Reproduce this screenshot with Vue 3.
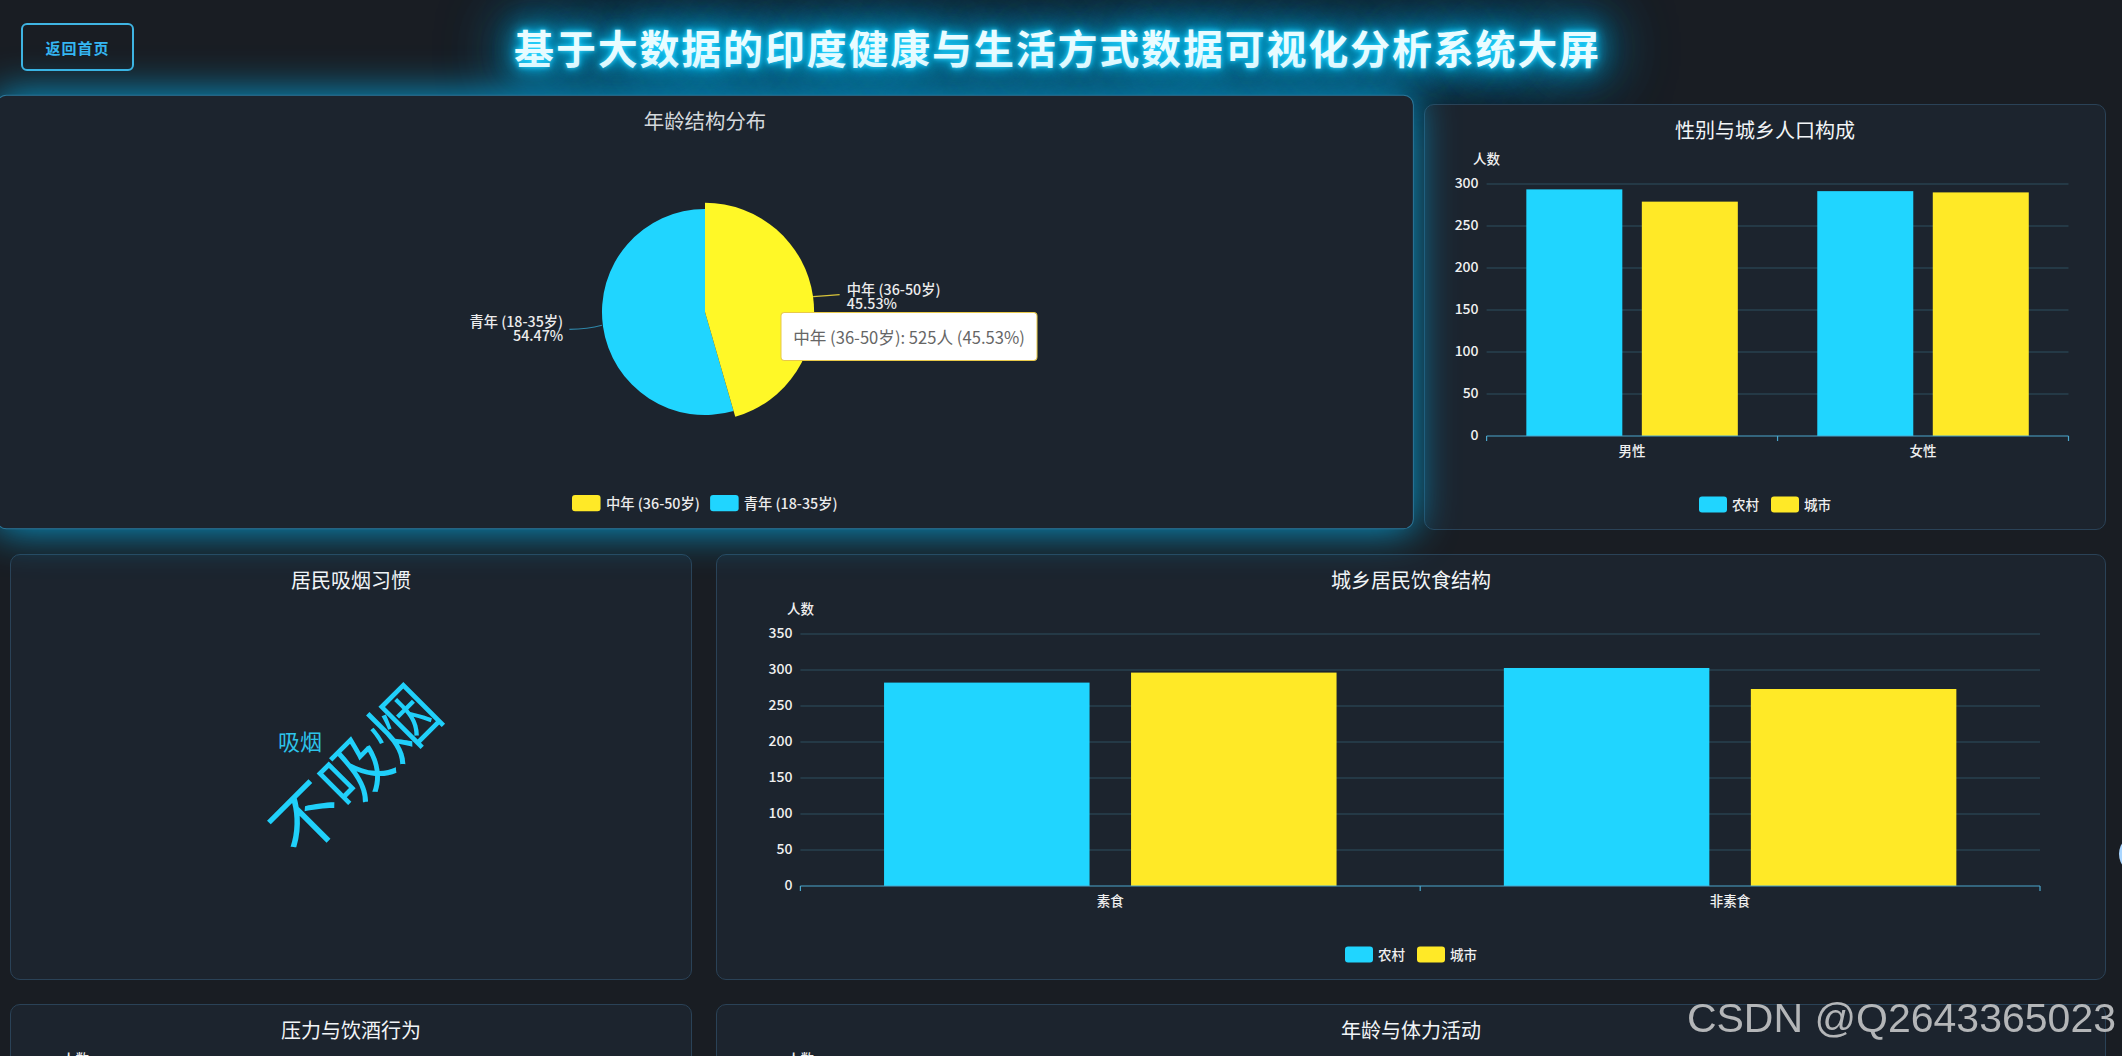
<script setup>
// 图表颜色
const RURAL = '#20d5ff';
const URBAN = '#ffe927';

const makeBar = (opt) => {
  const { left, right, top, bottom, max, step, cats, series, cardW } = opt;
  const cw = cats.length ? (right - left) / cats.length : 0;
  const barW = opt.barW;
  const gap = opt.gap;
  const sy = (v) => bottom - (v / max) * (bottom - top);
  const ticks = [];
  if (cats.length) {
    for (let v = 0; v <= max; v += step) ticks.push({ v, y: sy(v) });
  }
  const bars = [];
  cats.forEach((c, i) => {
    const start = left + i * cw + (cw - barW * 2 - gap) / 2;
    bars.push({ id: c + 'r', x: start, y: sy(series[0][i]), h: bottom - sy(series[0][i]), fill: RURAL });
    bars.push({ id: c + 'u', x: start + barW + gap, y: sy(series[1][i]), h: bottom - sy(series[1][i]), fill: URBAN });
  });
  const labels = cats.map((c, i) => ({ text: c, x: left + (i + 0.5) * cw }));
  const axisTicks = cats.length ? cats.map((c, i) => left + i * cw).concat(right) : [];
  const lx = cardW / 2 - 66;
  return { left, right, bottom, barW, ticks, bars, labels, axisTicks, lx, hasAxis: cats.length > 0 };
};

const rows = [
  {
    cls: 'row-wide-first',
    cards: [
      { id: 'age', title: '年龄结构分布', kind: 'pie', active: true, w: 1390 },
      {
        id: 'gender', title: '性别与城乡人口构成', kind: 'bar', w: 682,
        chart: makeBar({
          left: 62.6, right: 644.5, top: 80, bottom: 332, max: 300, step: 50, barW: 96, gap: 19.5, cardW: 682,
          cats: ['男性', '女性'], series: [[293.6, 291.5], [279, 290]]
        })
      }
    ]
  },
  {
    cls: 'row-narrow-first',
    cards: [
      { id: 'smoke', title: '居民吸烟习惯', kind: 'cloud', w: 682 },
      {
        id: 'diet', title: '城乡居民饮食结构', kind: 'bar', w: 1390,
        chart: makeBar({
          left: 84.4, right: 1324, top: 80, bottom: 332, max: 350, step: 50, barW: 205.5, gap: 41.5, cardW: 1390,
          cats: ['素食', '非素食'], series: [[282.5, 302.8], [296.4, 273.6]]
        })
      }
    ]
  },
  {
    // 第三行只露出标题和坐标轴名称
    cls: 'row-narrow-first',
    cards: [
      {
        id: 'stress', title: '压力与饮酒行为', kind: 'bar', w: 682,
        chart: makeBar({ left: 65.5, right: 644, top: 80, bottom: 332, max: 300, step: 50, barW: 96, gap: 19, cardW: 682, cats: [], series: [[], []] })
      },
      {
        id: 'activity', title: '年龄与体力活动', kind: 'bar', w: 1390,
        chart: makeBar({ left: 84.4, right: 1324, top: 80, bottom: 332, max: 300, step: 50, barW: 205, gap: 41, cardW: 1390, cats: [], series: [[], []] })
      }
    ]
  }
];

// 饼图：中年 45.53%，高亮时半径放大
const cx = 695;
const cy = 213;
const endAngle = (0.4553 * 360 * Math.PI) / 180;
const point = (r, a) => `${cx + r * Math.sin(a)} ${cy - r * Math.cos(a)}`;
const midPath = `M${cx} ${cy}L${point(107, 0)}A107 107 0 0 1 ${point(107, endAngle)}Z`;
const youngPath = `M${cx} ${cy}L${point(101, endAngle)}A101 101 0 1 1 ${point(101, Math.PI * 2)}Z`;
</script>

<template>
  <div class="screen">
    <header class="top">
      <button class="back">返回首页</button>
      <h1 class="big-title">基于大数据的印度健康与生活方式数据可视化分析系统大屏</h1>
    </header>

    <section v-for="(row, ri) in rows" :key="ri" class="row" :class="row.cls">
      <div v-for="card in row.cards" :key="card.id" class="card" :class="{ active: card.active }">
        <h3 class="card-title">{{ card.title }}</h3>

        <svg class="chart" :viewBox="`1 47 ${card.w - 2} 378`" preserveAspectRatio="xMinYMin meet">
          <template v-if="card.kind === 'pie'">
            <path :d="youngPath" fill="#20d5ff" />
            <path :d="midPath" fill="#fff827" />
            <path d="M801 198Q815 197 827 196" class="pie-line" stroke="#d8c43a" />
            <path d="M562 230Q580 230 594 226" class="pie-line" stroke="#2f86a8" />
            <text class="pie-label" y="189"><tspan x="834">中年 (36-50岁)</tspan><tspan x="834" dy="14">45.53%</tspan></text>
            <text class="pie-label" y="221" text-anchor="end"><tspan x="556">青年 (18-35岁)</tspan><tspan x="556" dy="14">54.47%</tspan></text>
            <rect x="564.6" y="392.4" width="28" height="16" rx="3" fill="#ffe927" />
            <text x="598" y="400" class="pie-label">中年 (36-50岁)</text>
            <rect x="700" y="392.4" width="28" height="16" rx="3" fill="#20d5ff" />
            <text x="733" y="400" class="pie-label">青年 (18-35岁)</text>
          </template>

          <template v-else-if="card.kind === 'cloud'">
            <text x="290" y="186" class="word-small">吸烟</text>
            <text x="342" y="214" class="word-big" transform="rotate(-45 342 214)">不吸烟</text>
          </template>

          <template v-else>
            <text :x="card.chart.left" y="54" class="axis-name">人数</text>
            <g v-for="t in card.chart.ticks" :key="t.v">
              <line v-if="t.v > 0" :x1="card.chart.left" :x2="card.chart.right" :y1="t.y" :y2="t.y" class="grid-line" />
              <text :x="card.chart.left - 8" :y="t.y - 2" class="tick-label">{{ t.v }}</text>
            </g>
            <rect
              v-for="b in card.chart.bars"
              :key="b.id"
              :x="b.x"
              :y="b.y"
              :width="card.chart.barW"
              :height="b.h"
              :fill="b.fill"
            />
            <template v-if="card.chart.hasAxis">
              <line :x1="card.chart.left" :x2="card.chart.right" :y1="card.chart.bottom" :y2="card.chart.bottom" class="axis-line" />
              <line
                v-for="x in card.chart.axisTicks"
                :key="x"
                :x1="x"
                :x2="x"
                :y1="card.chart.bottom"
                :y2="card.chart.bottom + 5"
                class="axis-line"
              />
              <text v-for="l in card.chart.labels" :key="l.text" :x="l.x" :y="card.chart.bottom + 14" class="cat-label">{{ l.text }}</text>
              <rect :x="card.chart.lx" y="392.5" width="28" height="16" rx="3" fill="#20d5ff" />
              <text :x="card.chart.lx + 33" y="400" class="legend-label">农村</text>
              <rect :x="card.chart.lx + 72" y="392.5" width="28" height="16" rx="3" fill="#ffe927" />
              <text :x="card.chart.lx + 105" y="400" class="legend-label">城市</text>
            </template>
          </template>
        </svg>

        <div v-if="card.kind === 'pie'" class="tooltip">中年 (36-50岁): 525人 (45.53%)</div>
      </div>
    </section>

    <div class="float-ball"></div>
    <div class="watermark">CSDN @Q2643365023</div>
  </div>
</template>

<style>
html, body {
  margin: 0;
  height: 100%;
  overflow: hidden;
  background: #191d23;
}
</style>

<style scoped>
.screen {
  height: 100vh;
  overflow: hidden;
  box-sizing: border-box;
  padding: 0 16px 0 10px;
  background: #191d23;
  font-family: "Noto Sans CJK SC", "Liberation Sans", sans-serif;
}
.top {
  display: grid;
  grid-template-columns: 1fr auto 1fr;
  align-items: center;
  height: 104px;
  padding-bottom: 10px;
  box-sizing: border-box;
}
.back {
  grid-column: 1;
  justify-self: start;
  margin-left: 11px;
  width: 113px;
  height: 48px;
  border: 2px solid #3fb4e2;
  border-radius: 6px;
  background: transparent;
  color: #35b6f2;
  font: 700 15px "Noto Sans CJK SC", sans-serif;
  letter-spacing: 1px;
}
.big-title {
  grid-column: 2;
  margin: 0 0 0 -1px;
  font-size: 40px;
  font-weight: 700;
  letter-spacing: 1.8px;
  white-space: nowrap;
  color: #eafcff;
  text-shadow: 0 0 5px #35d8ff, 0 0 12px #00c8ff, 0 0 24px #00a8dc, 0 0 40px #0a9ccc, 0 0 60px #0a8fc0, 0 0 70px #0a8fc0, 0 0 80px #0a7ea8;
}
.row {
  display: grid;
  gap: 24px;
  margin-bottom: 24px;
}
.row-wide-first {
  grid-template-columns: 1390px 682px;
}
.row-narrow-first {
  grid-template-columns: 682px 1390px;
}
.card {
  position: relative;
  height: 426px;
  box-sizing: border-box;
  border: 1px solid #2a4257;
  border-radius: 10px;
  background: #1c242e;
  display: flex;
  flex-direction: column;
}
.card.active {
  transform: translateY(-5px) scale(1.02);
  z-index: 2;
  border-color: #2b7699;
  box-shadow: 0 0 40px rgba(0, 190, 255, 0.8);
}
.card-title {
  margin: 0;
  padding-top: 5px;
  height: 41px;
  line-height: 40px;
  flex: none;
  text-align: center;
  font-size: 20px;
  font-weight: 400;
  color: #f2f5f7;
}
.active .card-title {
  color: #d4d8dc;
}
.chart {
  display: block;
  width: 100%;
  flex: 1;
  min-height: 0;
  overflow: visible;
}
.chart text {
  font-family: "Noto Sans CJK SC", "Liberation Sans", sans-serif;
  dominant-baseline: central;
}
.pie-label {
  font-size: 14px;
  font-weight: 500;
  fill: #ececec;
}
.pie-line {
  fill: none;
  stroke-width: 1.2;
}
.word-small {
  font-size: 22px;
  fill: #2cc3ea;
  text-anchor: middle;
}
.word-big {
  font-size: 68px;
  fill: #20d0fa;
  text-anchor: middle;
}
.axis-name {
  font-size: 13.5px;
  font-weight: 500;
  fill: #f0f0f0;
  text-anchor: middle;
}
.tick-label {
  font-size: 14px;
  font-weight: 500;
  fill: #f0f0f0;
  text-anchor: end;
}
.cat-label,
.legend-label {
  font-size: 13.5px;
  font-weight: 500;
  fill: #f0f0f0;
}
.cat-label {
  text-anchor: middle;
}
.grid-line {
  stroke: #27404f;
  stroke-width: 1.4;
}
.axis-line {
  stroke: #4aa6cc;
  stroke-width: 1.2;
}
.tooltip {
  position: absolute;
  left: 768px;
  top: 212px;
  width: 252px;
  height: 48px;
  box-sizing: border-box;
  line-height: 46px;
  text-align: center;
  white-space: nowrap;
  background: #fff;
  border: 1px solid #e8c94a;
  border-radius: 4px;
  color: #666;
  font-size: 16.3px;
}
.float-ball {
  position: fixed;
  right: -39px;
  top: 833px;
  width: 42px;
  height: 42px;
  border-radius: 50%;
  background: #a9d6ff;
}
.watermark {
  position: fixed;
  right: 6px;
  top: 995px;
  font: 41px "Liberation Sans", Arial, sans-serif;
  line-height: 46px;
  color: #b4b6b8;
  white-space: nowrap;
}
</style>
